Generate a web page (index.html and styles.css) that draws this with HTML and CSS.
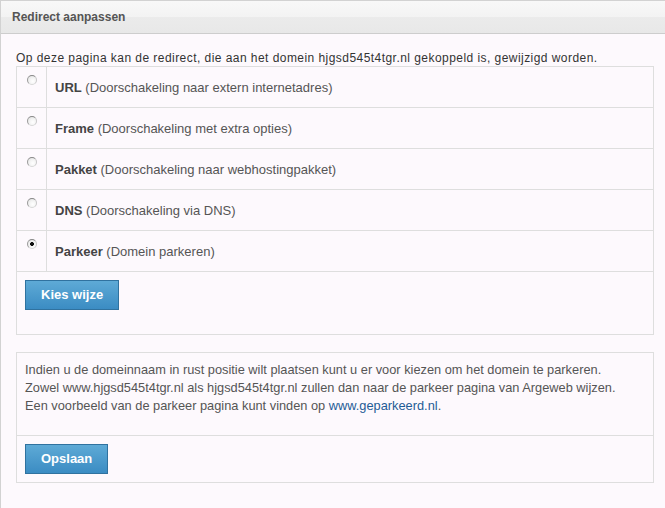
FILE: index.html
```html
<!DOCTYPE html>
<html lang="nl">
<head>
    <meta charset="UTF-8">
    <title>Redirect aanpassen</title>
    <link rel="stylesheet" href="styles.css">
</head>
<body>

    <div class="panel">
        <div class="panel-header">Redirect aanpassen</div>
        <div class="panel-body">
            <p class="intro">Op deze pagina kan de redirect, die aan het domein hjgsd545t4tgr.nl gekoppeld is, gewijzigd worden.</p>

            <form class="box" id="redirectForm">
                <table class="choices">
                    <tr>
                        <td class="pick"><input type="radio" name="wijze" value="url"></td>
                        <td class="desc"><b>URL</b> (Doorschakeling naar extern internetadres)</td>
                    </tr>
                    <tr>
                        <td class="pick"><input type="radio" name="wijze" value="frame"></td>
                        <td class="desc"><b>Frame</b> (Doorschakeling met extra opties)</td>
                    </tr>
                    <tr>
                        <td class="pick"><input type="radio" name="wijze" value="pakket"></td>
                        <td class="desc"><b>Pakket</b> (Doorschakeling naar webhostingpakket)</td>
                    </tr>
                    <tr>
                        <td class="pick"><input type="radio" name="wijze" value="dns"></td>
                        <td class="desc"><b>DNS</b> (Doorschakeling via DNS)</td>
                    </tr>
                    <tr>
                        <td class="pick"><input type="radio" name="wijze" value="parkeer" checked></td>
                        <td class="desc"><b>Parkeer</b> (Domein parkeren)</td>
                    </tr>
                </table>
                <div class="actions actions-tall">
                    <button type="submit" class="btn">Kies wijze</button>
                </div>
            </form>

            <div class="box">
                <div class="box-text">
                    Indien u de domeinnaam in rust positie wilt plaatsen kunt u er voor kiezen om het domein te parkeren.<br>
                    Zowel www.hjgsd545t4tgr.nl als hjgsd545t4tgr.nl zullen dan naar de parkeer pagina van Argeweb wijzen.<br>
                    Een voorbeeld van de parkeer pagina kunt vinden op <a href="#">www.geparkeerd.nl</a>.
                </div>
                <div class="actions">
                    <button type="button" class="btn">Opslaan</button>
                </div>
            </div>
        </div>
    </div>

</body>
</html>
```

FILE: styles.css
```css
html {
    overflow: hidden;
}
body {
    font-family: "Liberation Sans", Arial, sans-serif;
    font-size: 13px;
    color: #555;
    background-color: #fdf9fd;
    margin: 0;
}
.panel {
    width: 670px;
    min-height: 100vh;
    border-top: 1px solid #d2d2d2;
    border-left: 1px solid #d2d2d2;
}
.panel-header {
    height: 32px;
    line-height: 32px;
    padding-left: 11px;
    font-size: 12px;
    font-weight: bold;
    color: #555;
    background: linear-gradient(#f8f8f8 0, #f3f3f3 50%, #ebebeb 50%, #e8e8e8 100%);
    border-bottom: 1px solid #cdcdcd;
}
.panel-body {
    padding: 16px 0 0 15px;
}
.intro {
    margin: 0;
    font-size: 12px;
    letter-spacing: 0.45px;
    line-height: 16px;
    color: #333;
}
.box {
    display: block;
    width: 636px;
    margin: 0 0 17px 0;
    border: 1px solid #dedede;
}
.choices {
    width: 100%;
    border-collapse: collapse;
}
.choices td {
    border-bottom: 1px solid #dedede;
    vertical-align: top;
}
.pick {
    width: 29px;
    height: 40px;
    padding: 0;
    border-right: 1px solid #dedede;
}
.desc {
    padding: 13px 0 0 8px;
    line-height: 16px;
}
.desc b {
    color: #444;
}
input[type="radio"] {
    appearance: none;
    display: block;
    width: 10px;
    height: 10px;
    margin: 8px 0 0 10px;
    border: 1px solid #a9a9a9;
    border-color: #888 #c8c8c8 #d8d8d8 #999;
    border-radius: 50%;
    background: radial-gradient(circle at 60% 65%, #fff 0, #f4f4f4 45%, #dcdcdc 100%);
}
input[type="radio"]:checked {
    background: radial-gradient(circle, #111 0, #111 1.8px, transparent 2.2px),
                radial-gradient(circle at 60% 65%, #fff 0, #f4f4f4 45%, #dcdcdc 100%);
}
.actions {
    padding: 8px;
}
.actions-tall {
    padding-bottom: 24px;
}
.box-text {
    padding: 8px 8px 20px 8px;
    font-size: 12.8px;
    line-height: 18px;
    border-bottom: 1px solid #dedede;
}
.box-text a {
    color: #1f5c96;
    text-decoration: none;
}
.btn {
    font-family: "Liberation Sans", Arial, sans-serif;
    font-size: 13px;
    font-weight: bold;
    color: #fff;
    line-height: 16px;
    padding: 6px 15px;
    border: 1px solid #30729f;
    border-radius: 0;
    background: linear-gradient(#5eaad6, #3b8cc3);
    cursor: pointer;
}
.btn:hover {
    background: linear-gradient(#4f9dcb, #337fb3);
}
```
